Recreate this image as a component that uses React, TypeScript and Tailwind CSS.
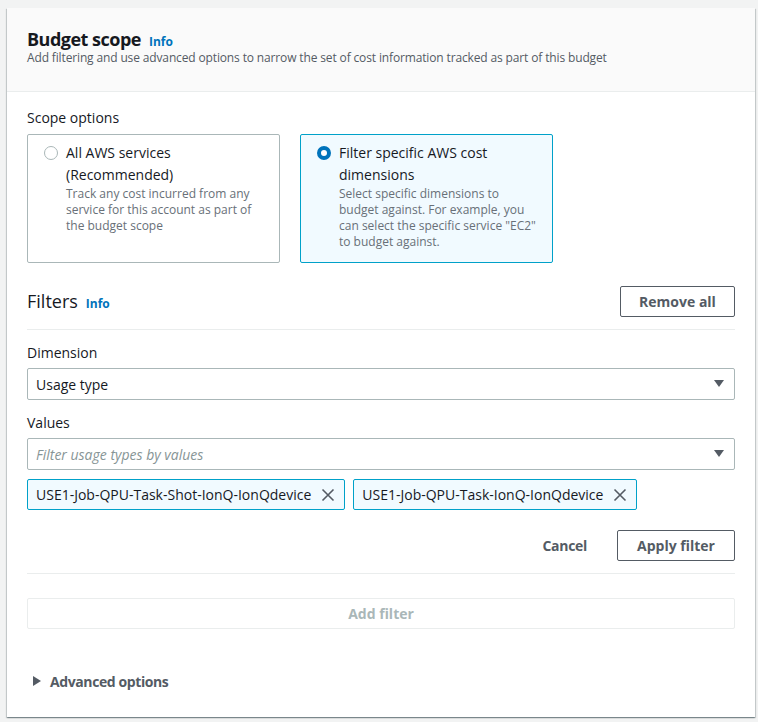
import React from "react";

const font = { fontFamily: "'Open Sans', 'Noto Sans', sans-serif" };

function Radio({ checked }: { checked: boolean }) {
  return checked ? (
    <span className="w-[14px] h-[14px] rounded-full border-[4px] border-[#0073bb] bg-white shrink-0" />
  ) : (
    <span className="w-[14px] h-[14px] rounded-full border border-[#aab7b8] bg-white shrink-0" />
  );
}

function Caret() {
  return (
    <svg width="10" height="8" viewBox="0 0 10 8" className="shrink-0">
      <path d="M0 0 H10 L5 7 Z" fill="#545b64" />
    </svg>
  );
}

function XIcon() {
  return (
    <svg width="14" height="14" viewBox="0 0 14 14" className="shrink-0">
      <path d="M1.5 1.5 L12.5 12.5 M12.5 1.5 L1.5 12.5" stroke="#545b64" strokeWidth="1.6" fill="none" />
    </svg>
  );
}

function Token({ label }: { label: string }) {
  return (
    <div className="h-[31px] flex items-center gap-[10px] pl-[8px] pr-[9px] border border-[#00a1c9] bg-[#f1faff] rounded-[2px] text-[14px] text-[#16191f]">
      <span>{label}</span>
      <XIcon />
    </div>
  );
}

export default function App() {
  return (
    <div className="w-[758px] h-[722px] bg-[#f2f3f3] pt-[8px] pl-[7px]" style={font}>
      <div className="w-[748px] h-[709px] bg-white shadow-[0_1px_1px_0_rgba(0,28,36,0.3),1px_1px_1px_0_rgba(0,28,36,0.15),-1px_1px_1px_0_rgba(0,28,36,0.15)] flex flex-col">
        <div className="bg-[#fafafa] border-b border-[#eaeded] px-5 pt-[21px] pb-[25px]">
          <div className="flex items-baseline gap-[8px] leading-[20px]">
            <span className="text-[18px] font-bold tracking-[-0.5px] text-[#16191f]">Budget scope</span>
            <span className="text-[12px] font-bold text-[#0073bb]">Info</span>
          </div>
          <div className="mt-[-2px] text-[12px] leading-[16px] tracking-[-0.14px] text-[#545b64]">
            Add filtering and use advanced options to narrow the set of cost information tracked as part of this budget
          </div>
        </div>

        <div className="px-5 pt-[15px] flex flex-col">
          <div className="text-[14px] leading-[22px] text-[#16191f]">Scope options</div>
          <div className="mt-[5px] flex gap-[20px]">
            <div className="w-[253px] h-[129px] border border-[#aab7b8] rounded-[2px] pl-[16px] pr-[12px] pt-[7px] flex gap-[8px]">
              <div className="h-[22px] flex items-center">
                <Radio checked={false} />
              </div>
              <div>
                <div className="text-[14px] leading-[22px] text-[#16191f]">All AWS services (Recommended)</div>
                <div className="text-[12px] leading-[16px] text-[#687078]">
                  Track any cost incurred from any service for this account as part of the budget scope
                </div>
              </div>
            </div>
            <div className="w-[253px] h-[129px] border border-[#00a1c9] bg-[#f1faff] rounded-[2px] pl-[16px] pr-[12px] pt-[7px] flex gap-[8px]">
              <div className="h-[22px] flex items-center">
                <Radio checked={true} />
              </div>
              <div>
                <div className="text-[14px] leading-[22px] text-[#16191f]">Filter specific AWS cost dimensions</div>
                <div className="text-[12px] leading-[16px] text-[#687078]">
                  Select specific dimensions to budget against. For example, you can select the specific service "EC2" to budget against.
                </div>
              </div>
            </div>
          </div>

          <div className="mt-[23px] flex items-center justify-between">
            <div className="flex items-baseline gap-[8px]">
              <span className="text-[18px] text-[#16191f]">Filters</span>
              <span className="text-[12px] font-bold text-[#0073bb]">Info</span>
            </div>
            <button className="h-[31px] w-[115px] border border-[#545b64] rounded-[2px] bg-white text-[14px] font-bold text-[#545b64]">
              Remove all
            </button>
          </div>
          <div className="mt-[12px] h-px bg-[#eaeded]" />

          <div className="mt-[12px] text-[14px] leading-[22px] text-[#16191f]">Dimension</div>
          <div className="mt-[4px] h-[32px] border border-[#aab7b8] rounded-[2px] flex items-center justify-between pl-[8px] pr-[10px]">
            <span className="text-[14px] text-[#16191f]">Usage type</span>
            <Caret />
          </div>

          <div className="mt-[12px] text-[14px] leading-[22px] text-[#16191f]">Values</div>
          <div className="mt-[4px] h-[32px] border border-[#aab7b8] rounded-[2px] flex items-center justify-between pl-[8px] pr-[10px]">
            <span className="text-[14px] italic text-[#879596]">Filter usage types by values</span>
            <Caret />
          </div>

          <div className="mt-[9px] flex gap-[8px]">
            <Token label="USE1-Job-QPU-Task-Shot-IonQ-IonQdevice" />
            <Token label="USE1-Job-QPU-Task-IonQ-IonQdevice" />
          </div>

          <div className="mt-[20px] flex justify-end items-center gap-[30px]">
            <button className="h-[31px] text-[14px] font-bold tracking-[-0.3px] text-[#545b64]">Cancel</button>
            <button className="h-[31px] w-[118px] border border-[#545b64] rounded-[2px] bg-white text-[14px] font-bold text-[#545b64]">
              Apply filter
            </button>
          </div>
          <div className="mt-[12px] h-px bg-[#eaeded]" />

          <button className="mt-[24px] h-[31px] border border-[#eaeded] rounded-[2px] bg-white text-[14px] font-bold text-[#aab7b8]">
            Add filter
          </button>

          <div className="mt-[41px] h-[22px] flex items-center gap-[9px] pl-[6px]">
            <svg width="8" height="10" viewBox="0 0 8 10" className="shrink-0">
              <path d="M0 0 L8 5 L0 10 Z" fill="#545b64" />
            </svg>
            <span className="text-[14px] font-bold tracking-[-0.4px] text-[#545b64]">Advanced options</span>
          </div>
        </div>
      </div>
    </div>
  );
}
